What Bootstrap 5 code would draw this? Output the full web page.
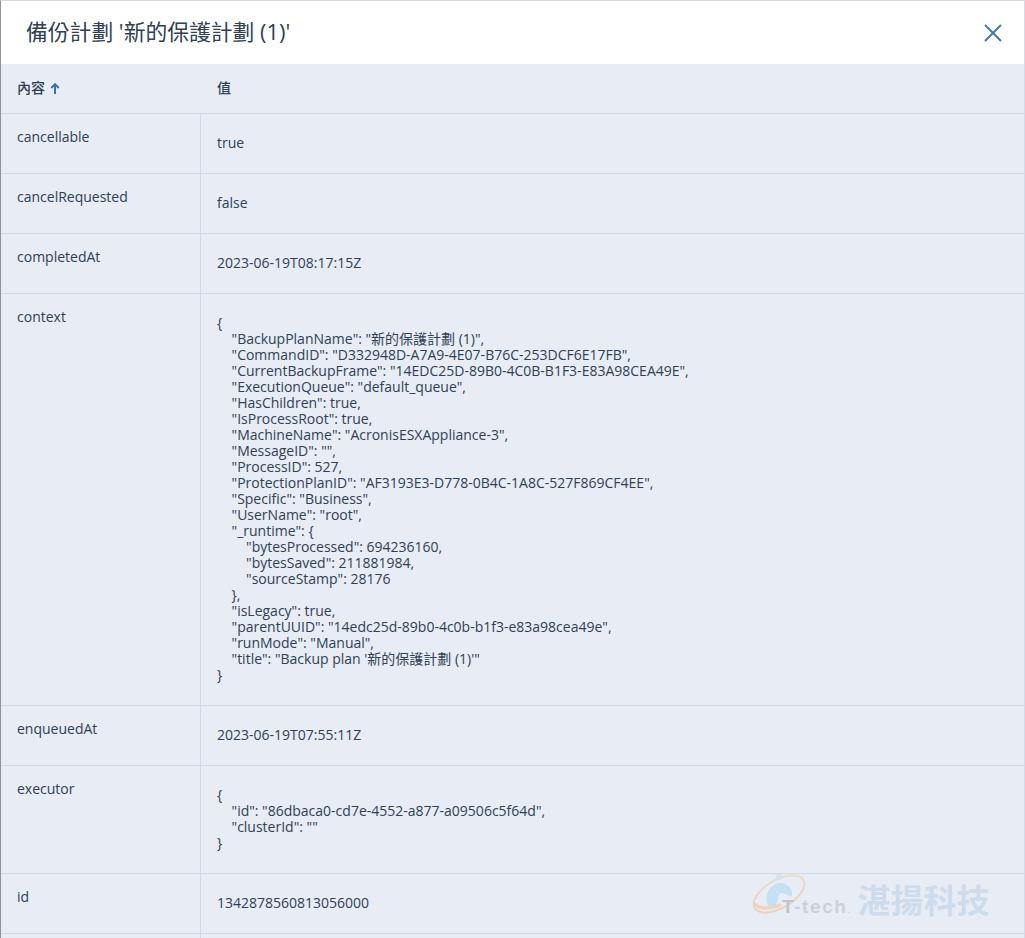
<!DOCTYPE html>
<html lang="zh-Hant">
<head>
<meta charset="utf-8">
<title>備份計劃</title>
<link href="https://cdn.jsdelivr.net/npm/bootstrap@5.3.0/dist/css/bootstrap.min.css" rel="stylesheet">
<style>
html,body{height:938px;overflow:hidden;background:#e7ecf5}
body{font-family:"Open Sans","Noto Sans CJK TC",sans-serif;font-size:14px;line-height:16px;color:#2f4156;position:relative}
.shell{border-top:1px solid #d9d9d9;border-left:1px solid #8f949b;border-right:1px solid #d3dcec;height:938px;overflow:hidden}
.head-bar{height:63px;background:#fff;padding:0 24px 0 25px}
.head-title{font-size:21.8px;font-weight:400;line-height:24px;margin:-2px 0 0;color:#2f4156;font-family:"Open Sans","Noto Sans CJK TC",sans-serif}
.close-x{width:32px;height:32px;background:none;border:0;padding:0;margin-right:-9px;display:flex;align-items:center;justify-content:center}
.data-grid{table-layout:fixed;width:100%;margin:0;--bs-table-bg:transparent;--bs-table-color:#2f4156;--bs-table-border-color:#ced9ea;border-color:#ced9ea}
.data-grid th,.data-grid td{padding:0;border-bottom:1px solid #ced9ea;font-size:14px;line-height:16px;font-weight:400;vertical-align:top}
.data-grid thead th{height:49px;padding:16px;font-weight:500;vertical-align:middle;font-size:14px}
.data-grid .c1{width:199px;padding:15px 16px 0 16px}
.data-grid .c2{padding:21px 16px 22px 16.5px;border-left:1px solid #ced9ea}
.data-grid thead .c2{border-left:0;padding:16px 16px 16px 17px}
.data-grid thead .c1{padding:16px}
.val-pre{margin:0;font:inherit;white-space:pre;color:inherit;overflow:visible}
.sort-up{margin-left:5px;vertical-align:-1px}
.wm{position:absolute;left:752px;top:862px;width:250px;height:70px;pointer-events:none}
.wm-t{font-family:"Liberation Sans",sans-serif;font-weight:700;font-size:19px;letter-spacing:1.6px;fill:#ccd1d9}
.wm-t-cap{fill:#bfc5ce}
.wm-c{font-family:"Noto Sans CJK TC",sans-serif;font-weight:700;font-size:33px;fill:#cddcec}
</style>
</head>
<body>
<div class="shell">
  <div class="head-bar d-flex align-items-center justify-content-between">
    <h1 class="head-title">備份計劃 '新的保護計劃 (1)'</h1>
    <button type="button" class="close-x" aria-label="Close">
      <svg width="20" height="20" viewBox="0 0 20 20"><path d="M2 2L18 18M18 2L2 18" stroke="#4277b3" stroke-width="2" fill="none"/></svg>
    </button>
  </div>
  <table class="table data-grid">
    <thead>
      <tr>
        <th class="c1">內容<svg class="sort-up" width="10" height="11" viewBox="0 0 10 11"><path d="M5 11V1.5M1.2 5L5 1.2L8.8 5" stroke="#3f6ea8" stroke-width="2" fill="none"/></svg></th>
        <th class="c2">值</th>
      </tr>
    </thead>
    <tbody>
      <tr><td class="c1">cancellable</td><td class="c2">true</td></tr>
      <tr><td class="c1">cancelRequested</td><td class="c2">false</td></tr>
      <tr><td class="c1">completedAt</td><td class="c2">2023-06-19T08:17:15Z</td></tr>
      <tr><td class="c1">context</td><td class="c2"><pre class="val-pre">{
    "BackupPlanName": "新的保護計劃 (1)",
    "CommandID": "D332948D-A7A9-4E07-B76C-253DCF6E17FB",
    "CurrentBackupFrame": "14EDC25D-89B0-4C0B-B1F3-E83A98CEA49E",
    "ExecutionQueue": "default_queue",
    "HasChildren": true,
    "IsProcessRoot": true,
    "MachineName": "AcronisESXAppliance-3",
    "MessageID": "",
    "ProcessID": 527,
    "ProtectionPlanID": "AF3193E3-D778-0B4C-1A8C-527F869CF4EE",
    "Specific": "Business",
    "UserName": "root",
    "_runtime": {
        "bytesProcessed": 694236160,
        "bytesSaved": 211881984,
        "sourceStamp": 28176
    },
    "isLegacy": true,
    "parentUUID": "14edc25d-89b0-4c0b-b1f3-e83a98cea49e",
    "runMode": "Manual",
    "title": "Backup plan '新的保護計劃 (1)'"
}</pre></td></tr>
      <tr><td class="c1">enqueuedAt</td><td class="c2">2023-06-19T07:55:11Z</td></tr>
      <tr><td class="c1">executor</td><td class="c2"><pre class="val-pre">{
    "id": "86dbaca0-cd7e-4552-a877-a09506c5f64d",
    "clusterId": ""
}</pre></td></tr>
      <tr><td class="c1">id</td><td class="c2">1342878560813056000</td></tr>
      <tr><td class="c1">&nbsp;</td><td class="c2">&nbsp;</td></tr>
    </tbody>
  </table>
</div>
<svg class="wm" viewBox="0 -8 250 70">
  <defs><linearGradient id="wg" x1="0" y1="1" x2="1" y2="0"><stop offset="0" stop-color="#f0cdb4"/><stop offset="1" stop-color="#e9dfca"/></linearGradient></defs>
  <ellipse cx="27" cy="24" rx="28" ry="14" transform="rotate(-30 27 24)" fill="none" stroke="url(#wg)" stroke-width="2"/>
  <path d="M2 32C2 41 16 42 30 36L28 33C16 38 8 37 2 32Z" fill="#efd3bf"/>
  <circle cx="27" cy="7" r="3" fill="#cfe3f2"/>
  <path d="M16 35C11 24 20 12 29 13C37 14 41 20 40 26C37 27 34 24 31 23C26 22 26 30 24 35C21 37 18 37 16 35Z" fill="#c5e0f2"/>
  <text class="wm-t" x="30" y="43"><tspan class="wm-t-cap">T</tspan>-tech<tspan font-size="7">.</tspan></text>
  <text class="wm-c" x="105.5" y="43">湛揚科技</text>
</svg>
<script src="https://cdn.jsdelivr.net/npm/bootstrap@5.3.0/dist/js/bootstrap.bundle.min.js"></script>
</body>
</html>
